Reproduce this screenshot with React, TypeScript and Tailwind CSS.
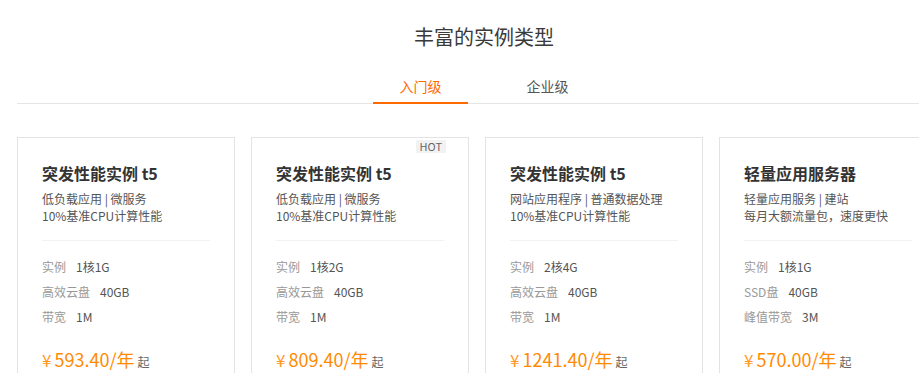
const cards = [
  {
    title: "突发性能实例 t5",
    lines: ["低负载应用 | 微服务", "10%基准CPU计算性能"],
    specs: [
      ["实例", "1核1G"],
      ["高效云盘", "40GB"],
      ["带宽", "1M"],
    ],
    price: "593.40",
    hot: false,
  },
  {
    title: "突发性能实例 t5",
    lines: ["低负载应用 | 微服务", "10%基准CPU计算性能"],
    specs: [
      ["实例", "1核2G"],
      ["高效云盘", "40GB"],
      ["带宽", "1M"],
    ],
    price: "809.40",
    hot: true,
  },
  {
    title: "突发性能实例 t5",
    lines: ["网站应用程序 | 普通数据处理", "10%基准CPU计算性能"],
    specs: [
      ["实例", "2核4G"],
      ["高效云盘", "40GB"],
      ["带宽", "1M"],
    ],
    price: "1241.40",
    hot: false,
  },
  {
    title: "轻量应用服务器",
    lines: ["轻量应用服务 | 建站", "每月大额流量包，速度更快"],
    specs: [
      ["实例", "1核1G"],
      ["SSD盘", "40GB"],
      ["峰值带宽", "3M"],
    ],
    price: "570.00",
    hot: false,
  },
];

const tabs = [
  { name: "入门级", current: true },
  { name: "企业级", current: false },
];

export default function App() {
  return (
    <div className="h-[373px] w-[919px] overflow-hidden bg-white font-['Noto_Sans_CJK_SC','Liberation_Sans',sans-serif]">
      <div className="ml-[17px] w-[934px] pt-[23px]">
        <h2 className="text-center text-[20px] leading-[28px] font-normal text-[#3a3a3a]">
          丰富的实例类型
        </h2>

        {/* tabs */}
        <div className="mt-[25px] flex justify-center gap-[32px] border-b border-[#e5e5e5]">
          {tabs.map((tab) => (
            <div
              key={tab.name}
              className={
                tab.current
                  ? "-mb-px w-[95px] border-b-2 border-[#ff6a00] pb-[6px] text-center text-[14px] leading-5 text-[#ff6a00]"
                  : "-mb-px w-[95px] border-b-2 border-transparent pb-[6px] text-center text-[14px] leading-5 text-[#555]"
              }
            >
              {tab.name}
            </div>
          ))}
        </div>

        {/* cards */}
        <div className="mt-[33px] flex gap-4">
          {cards.map((card, i) => (
            <div
              key={i}
              className="relative h-[260px] w-[218px] shrink-0 border border-[#e3e3e3] px-[24px] pt-[23px]"
            >
              {card.hot && (
                <span className="absolute right-[22px] top-[2px] bg-[#f2f2f2] px-[4px] text-[11px] leading-[13px] text-[#666]">
                  HOT
                </span>
              )}
              <div className="text-[16px] leading-6 font-bold text-[#333]">
                {card.title}
              </div>
              <div className="mt-[5px] text-[12px] leading-[17px] text-[#555]">
                {card.lines.map((l) => (
                  <div key={l}>{l}</div>
                ))}
              </div>
              <div className="mt-[16px] h-px bg-[#f2f2f2]" />
              <div className="mt-[13px] text-[12px] leading-[25px]">
                {card.specs.map(([label, value]) => (
                  <div key={label} className="flex">
                    <span className="text-[#999]">{label}</span>
                    <span className="ml-[10px] text-[#555]">{value}</span>
                  </div>
                ))}
              </div>
              <div className="mt-[17px] flex items-baseline leading-[26px]">
                <span className="mr-[3px] text-[17px] text-[#ff9a1f]">¥</span>
                <span className="text-[18px] text-[#ff8a00]">
                  {card.price}/年
                </span>
                <span className="ml-[3px] text-[12px] text-[#666]">起</span>
              </div>
            </div>
          ))}
        </div>
      </div>
    </div>
  );
}
